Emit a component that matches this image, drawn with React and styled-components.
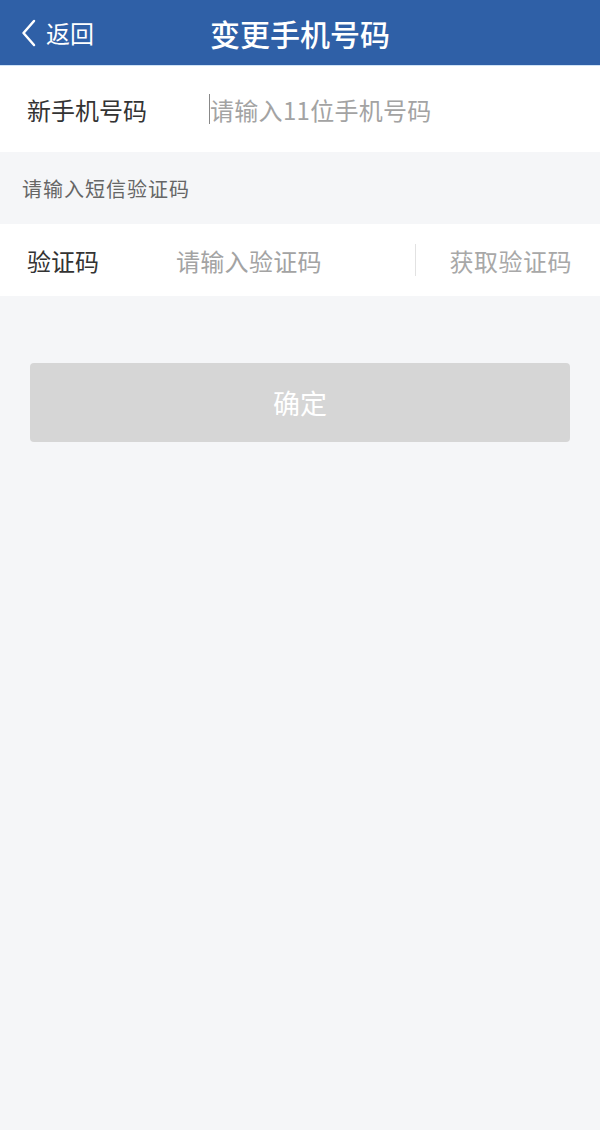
import React from 'react';
import styled, { createGlobalStyle } from 'styled-components';

const GlobalStyle = createGlobalStyle`
  html, body {
    margin: 0;
    padding: 0;
    background: #f5f6f8;
    font-family: "Noto Sans CJK SC", "Noto Sans", sans-serif;
  }
`;

const Page = styled.div`
  width: 600px;
  min-height: 1130px;
  background: #f5f6f8;
`;

const Header = styled.div`
  height: 65px;
  background: #2f60a7;
  border-bottom: 1px solid #cfe3f6;
  display: flex;
  align-items: center;
  position: relative;
`;

const Back = styled.div`
  display: flex;
  align-items: center;
  gap: 8px;
  padding-left: 20px;
  color: #fff;
  font-size: 24px;
`;

const Title = styled.div`
  position: absolute;
  left: 0;
  right: 0;
  text-align: center;
  color: #fff;
  font-size: 30px;
  font-weight: 500;
  pointer-events: none;
`;

const Row = styled.div`
  height: ${p => p.h}px;
  background: #fff;
  display: flex;
  align-items: center;
  padding: 0 28px 0 27px;
`;

const Label = styled.div`
  width: ${p => p.w}px;
  flex-shrink: 0;
  color: #333;
  font-size: 24px;
`;

const Placeholder = styled.div`
  flex: 1;
  color: #a3a3a3;
  font-size: 24px;
  letter-spacing: 0.3px;
  display: flex;
  align-items: center;
`;

const Caret = styled.span`
  width: 1px;
  height: 30px;
  background: #888;
  margin-right: 0;
`;

const Hint = styled.div`
  height: 72px;
  display: flex;
  align-items: center;
  padding-left: 22px;
  color: #666;
  font-size: 20px;
  letter-spacing: 1px;
`;

const Divider = styled.div`
  width: 1px;
  height: 32px;
  background: #e2e2e2;
  margin-right: 34px;
`;

const SendCode = styled.div`
  color: #a8a8a8;
  font-size: 24px;
  letter-spacing: 0.5px;
`;

const Confirm = styled.div`
  margin: 67px 30px 0;
  height: 79px;
  border-radius: 4px;
  background: #d6d6d6;
  color: #fff;
  font-size: 27px;
  display: flex;
  align-items: center;
  justify-content: center;
`;

export default function App() {
  return (
    <Page>
      <GlobalStyle />
      <Header>
        <Back>
          <svg width="18" height="30" viewBox="0 0 18 30">
            <path d="M14 3 L3.5 15 L14 27" fill="none" stroke="#fff" strokeWidth="2.5" strokeLinecap="round" strokeLinejoin="round" />
          </svg>
          返回
        </Back>
        <Title>变更手机号码</Title>
      </Header>
      <Row h={86}>
        <Label w={182}>新手机号码</Label>
        <Placeholder><Caret />请输入11位手机号码</Placeholder>
      </Row>
      <Hint>请输入短信验证码</Hint>
      <Row h={72}>
        <Label w={149}>验证码</Label>
        <Placeholder>请输入验证码</Placeholder>
        <Divider />
        <SendCode>获取验证码</SendCode>
      </Row>
      <Confirm>确定</Confirm>
    </Page>
  );
}
